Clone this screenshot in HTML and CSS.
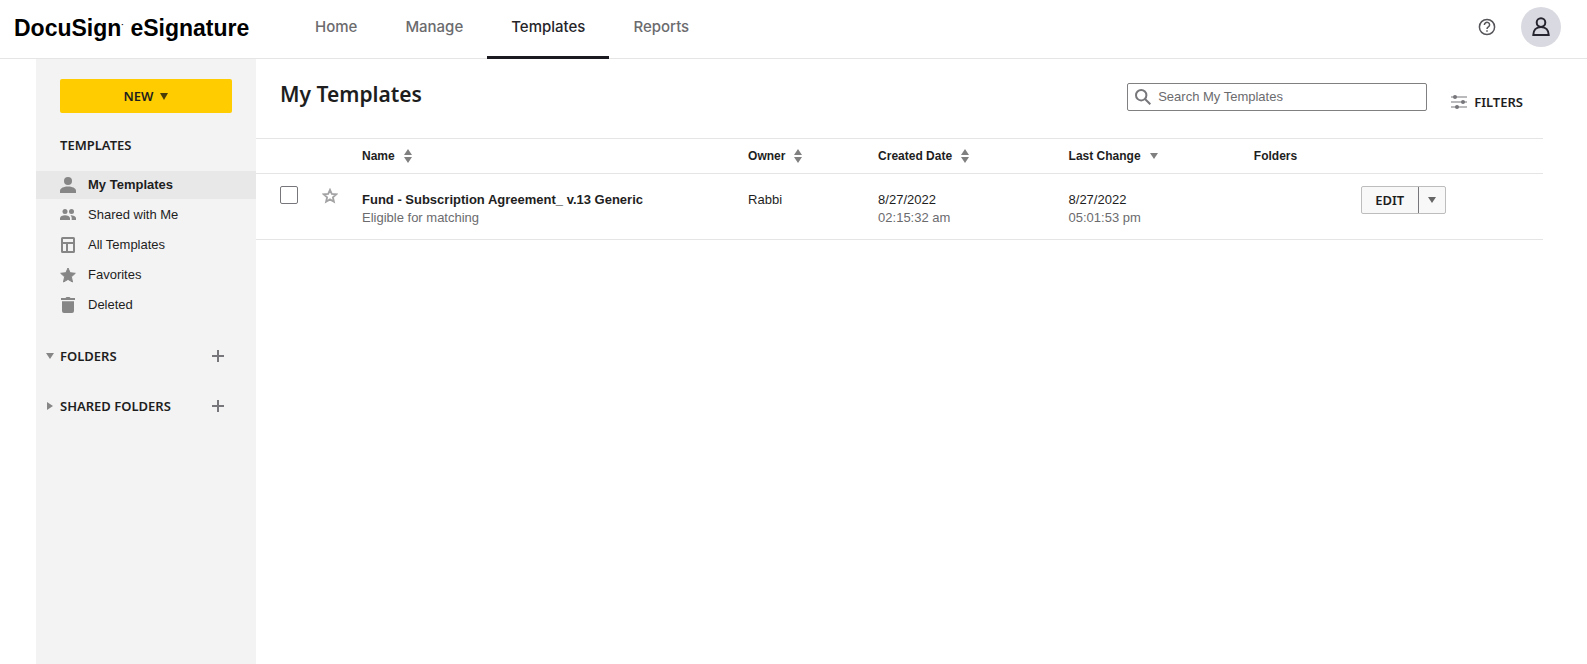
FILE: index.html
```html
<!DOCTYPE html>
<html lang="en">
<head>
<meta charset="utf-8">
<title>My Templates - DocuSign eSignature</title>
<link rel="stylesheet" href="styles.css">
</head>
<body>
<header class="topbar">
  <a class="brand" href="#">DocuSign<sup class="brand-mark">·</sup> eSignature</a>
  <nav class="nav" aria-label="Main">
    <a class="nav-link" href="#">Home</a>
    <a class="nav-link" href="#">Manage</a>
    <a class="nav-link nav-link-active" href="#" aria-current="page">Templates</a>
    <a class="nav-link" href="#">Reports</a>
  </nav>
  <div class="account">
    <button class="icon-button" type="button" aria-label="Help">
      <svg width="18" height="18" viewBox="0 0 18 18" fill="none" stroke="#55555a" stroke-width="1.5"><circle cx="9" cy="9" r="7.6"/><path d="M6.400 7V6.800a2.600 2.400 0 1 1 4 2C9.500 9.400 9 9.700 9 11"/><path d="M9 12.200v1.600"/></svg>
    </button>
    <button class="avatar" type="button" aria-label="Profile">
      <svg width="20" height="20" viewBox="0 0 20 20" fill="none" stroke="#26252f" stroke-width="2"><circle cx="10" cy="5.600" r="4.300"/><path d="M2.300 18c0-4.800 2.900-8.100 7.700-8.100s7.700 3.300 7.700 8.100z"/></svg>
    </button>
  </div>
</header>
<div class="layout">
  <aside class="sidebar">
    <button class="new-button" type="button">NEW
      <svg width="8" height="7" viewBox="0 0 8 7"><path d="M0 0h8L4 7z" fill="#4a3c08"/></svg>
    </button>
    <h2 class="side-heading">TEMPLATES</h2>
    <ul class="side-list">
      <li><a class="side-link side-link-active" href="#"><svg width="16" height="16" viewBox="0 0 16 16" fill="#868686"><circle cx="8" cy="4" r="4"/><path d="M0 16v-2.500C0 11 4 9.400 8 9.400s8 1.600 8 4.100V16z"/></svg>My Templates</a></li>
      <li><a class="side-link" href="#"><svg width="16" height="16" viewBox="0 0 16 16" fill="#868686"><circle cx="5" cy="4.500" r="2.500"/><circle cx="11.500" cy="4.500" r="2.500"/><path d="M0 13v-1.800C0 9.200 2.500 8.200 5 8.200s5 1 5 3V13zM10.300 8.200c3 0 5.700 1 5.700 3V13h-4.300v-1.800c0-1.300-.5-2.200-1.400-3z"/></svg>Shared with Me</a></li>
      <li><a class="side-link" href="#"><svg width="16" height="16" viewBox="0 0 16 16" fill="none" stroke="#868686" stroke-width="2"><rect x="2" y="1" width="12" height="14" rx=".5"/><path d="M2 6h12M7 6v9"/></svg>All Templates</a></li>
      <li><a class="side-link" href="#"><svg width="16" height="16" viewBox="0 0 16 16" fill="#868686" stroke="#868686" stroke-linejoin="round"><path d="M8 1l2.100 4.700 5.200.6-3.900 3.500 1.100 5.200L8 12.400 3.500 15l1.100-5.200L.7 6.300l5.200-.6z"/></svg>Favorites</a></li>
      <li><a class="side-link" href="#"><svg width="16" height="16" viewBox="0 0 16 16" fill="#868686"><path d="M1 1h4.500l1-1h3l1 1H15v2H1zM2 4.300h12V14a2 2 0 0 1-2 2H4a2 2 0 0 1-2-2z"/></svg>Deleted</a></li>
    </ul>
    <section class="folder-group">
      <button class="folder-toggle" type="button" aria-expanded="true"><svg width="8" height="8" viewBox="0 0 8 8"><path d="M0 1h8L4 7z" fill="#868686"/></svg>FOLDERS</button>
      <button class="icon-button" type="button" aria-label="Add folder"><svg width="12" height="12" viewBox="0 0 12 12" stroke="#77777b" stroke-width="2"><path d="M6 0v12M0 6h12"/></svg></button>
    </section>
    <section class="folder-group">
      <button class="folder-toggle" type="button" aria-expanded="false"><svg width="8" height="8" viewBox="0 0 8 8"><path d="M1 0v8l6-4z" fill="#868686"/></svg>SHARED FOLDERS</button>
      <button class="icon-button" type="button" aria-label="Add shared folder"><svg width="12" height="12" viewBox="0 0 12 12" stroke="#77777b" stroke-width="2"><path d="M6 0v12M0 6h12"/></svg></button>
    </section>
  </aside>
  <main class="content">
    <div class="content-head">
      <h1 class="title">My Templates</h1>
      <label class="search">
        <svg width="16" height="16" viewBox="0 0 16 16" fill="none" stroke="#77777b" stroke-width="2"><circle cx="6.200" cy="6.200" r="5.200"/><path d="M10 10l5.300 5.300"/></svg>
        <input class="search-input" type="text" placeholder="Search My Templates" aria-label="Search My Templates">
      </label>
      <button class="filters" type="button">
        <svg width="16" height="14" viewBox="0 0 16 14" fill="#77777b"><path d="M0 1.500h16v1H0zM0 6.500h16v1H0zM0 11.500h16v1H0z"/><circle cx="4" cy="2" r="2"/><circle cx="12" cy="7" r="2"/><circle cx="6" cy="12" r="2"/></svg>
        FILTERS
      </button>
    </div>
    <table class="table">
      <colgroup><col class="col-check"><col class="col-star"><col class="col-name"><col class="col-owner"><col class="col-created"><col class="col-changed"><col class="col-folders"><col></colgroup>
      <thead>
        <tr>
          <th></th><th></th>
          <th scope="col"><button class="sort" type="button">Name<svg width="8" height="14" viewBox="0 0 8 14" fill="#808080"><path d="M0 6h8L4 0zM0 8h8l-4 6z"/></svg></button></th>
          <th scope="col"><button class="sort" type="button">Owner<svg width="8" height="14" viewBox="0 0 8 14" fill="#808080"><path d="M0 6h8L4 0zM0 8h8l-4 6z"/></svg></button></th>
          <th scope="col"><button class="sort" type="button">Created Date<svg width="8" height="14" viewBox="0 0 8 14" fill="#808080"><path d="M0 6h8L4 0zM0 8h8l-4 6z"/></svg></button></th>
          <th scope="col" aria-sort="descending"><button class="sort" type="button">Last Change<svg width="8" height="14" viewBox="0 0 8 14" fill="#808080"><path d="M0 4h8l-4 6z"/></svg></button></th>
          <th scope="col">Folders</th>
          <th></th>
        </tr>
      </thead>
      <tbody>
        <tr>
          <td class="cell-control cell-first"><input class="check" type="checkbox" aria-label="Select template"></td>
          <td class="cell-control"><button class="icon-button star" type="button" aria-label="Add to favorites"><svg width="16" height="16" viewBox="0 0 16 16" fill="none" stroke="#a3a3a5" stroke-width="1.800"><path d="M8 1.800l1.800 4.100 4.500.4-3.400 3 1 4.400L8 11.400l-3.900 2.300 1-4.400-3.400-3 4.500-.4z"/></svg></button></td>
          <td><a class="name" href="#">Fund - Subscription Agreement_ v.13 Generic</a><div class="muted">Eligible for matching</div></td>
          <td>Rabbi</td>
          <td>8/27/2022<div class="muted">02:15:32 am</div></td>
          <td>8/27/2022<div class="muted">05:01:53 pm</div></td>
          <td></td>
          <td class="cell-actions">
            <div class="split">
              <button class="split-main" type="button">EDIT</button>
              <button class="split-more" type="button" aria-label="More actions"><svg width="8" height="6" viewBox="0 0 8 6"><path d="M0 0h8L4 6z" fill="#666"/></svg></button>
            </div>
          </td>
        </tr>
      </tbody>
    </table>
  </main>
</div>
</body>
</html>
```
FILE: styles.css
```css
* { box-sizing: border-box; }

body {
  margin: 0;
  min-height: 100vh;
  display: flex;
  flex-direction: column;
  background: #fff;
  color: #1e1e1e;
  font: 13px/18px "Liberation Sans", Arial, sans-serif;
}

a { color: inherit; text-decoration: none; }
svg { display: block; flex: none; }

button {
  margin: 0;
  padding: 0;
  border: 0;
  background: none;
  color: inherit;
  font: inherit;
  cursor: pointer;
}

.topbar {
  display: flex;
  align-items: center;
  height: 59px;
  padding: 0 26px 0 14px;
  border-bottom: 1px solid #e5e5e5;
}

.brand {
  width: 277px;
  padding-bottom: 3px;
  color: #000;
  font-size: 23px;
  font-weight: 700;
  line-height: 30px;
  white-space: nowrap;
}

.brand-mark { font-size: 8px; line-height: 1px; }

.nav { display: flex; align-self: stretch; margin-bottom: -1px; }

.nav-link {
  padding: 16px 24px 0;
  border-bottom: 3px solid transparent;
  color: #6b6b6e;
  font: 500 15px/22px Inter, sans-serif;
}

.nav-link-active { border-bottom-color: #1b1a21; color: #26252a; }

.account {
  display: flex;
  align-items: center;
  gap: 25px;
  margin-left: auto;
  padding-bottom: 4px;
}

.avatar {
  display: grid;
  place-items: center;
  width: 40px;
  height: 40px;
  border-radius: 50%;
  background: #d9d9e1;
}

.layout { flex: 1; display: flex; padding: 0 44px 0 36px; }

.sidebar { flex: none; width: 220px; background: #f3f3f3; }

.new-button {
  display: flex;
  align-items: center;
  justify-content: center;
  gap: 7px;
  width: 172px;
  height: 34px;
  margin: 20px 24px 0;
  border-radius: 2px;
  background: #ffcc00;
  font: 600 13px/18px "Noto Sans", sans-serif;
}

.side-heading {
  margin: 23px 24px 17px;
  font: 600 13px/18px "Noto Sans", sans-serif;
}

.side-list {
  display: grid;
  gap: 2px;
  margin: 0;
  padding: 0;
  list-style: none;
}

.side-link {
  display: flex;
  align-items: center;
  gap: 12px;
  height: 28px;
  padding: 0 24px 1px;
}

.side-link-active { padding-bottom: 0; background: #e8e8e8; font-weight: 700; }

.folder-group {
  display: flex;
  align-items: center;
  justify-content: space-between;
  height: 18px;
  margin-top: 32px;
  padding: 0 32px 0 10px;
}

.side-list + .folder-group { margin-top: 28px; }

.folder-toggle {
  display: flex;
  align-items: center;
  gap: 6px;
  font: 600 13px/18px "Noto Sans", sans-serif;
}

.content { flex: 1; min-width: 0; }

.content-head {
  display: flex;
  align-items: center;
  height: 79px;
  padding: 0 20px 3px 24px;
}

.title {
  margin: 0 auto 0 0;
  padding-bottom: 6px;
  font: 600 21px/28px "Noto Sans", sans-serif;
}

.search {
  display: flex;
  align-items: center;
  gap: 7px;
  width: 300px;
  height: 28px;
  padding: 0 7px;
  border: 1px solid #808083;
  border-radius: 2px;
}

.search-input {
  flex: 1;
  min-width: 0;
  padding: 0;
  border: 0;
  outline: 0;
  background: none;
  color: inherit;
  font: inherit;
}

.search-input::placeholder { color: #6b6b6e; opacity: 1; }

.filters {
  display: flex;
  align-items: center;
  gap: 7px;
  margin-left: 24px;
  padding-top: 9px;
  font: 600 13px/18px "Noto Sans", sans-serif;
}

.table {
  width: 100%;
  border-collapse: collapse;
  table-layout: fixed;
}

.table tr { border-top: 1px solid #e5e5e5; border-bottom: 1px solid #e5e5e5; }

.table th {
  height: 35px;
  padding: 0;
  text-align: left;
  font-size: 12px;
  font-weight: 700;
}

.table td { height: 66px; padding: 17px 0 12px; vertical-align: top; }

.col-check { width: 66px; }
.col-star { width: 40px; }
.col-name { width: 30%; }
.col-owner { width: 10.1%; }
.col-created { width: 14.8%; }
.col-changed { width: 14.4%; }
.col-folders { width: 8.3%; }

.sort { display: flex; align-items: center; gap: 9px; }

.table .cell-control { padding-top: 12px; }
.table .cell-first { padding-left: 24px; }
.table .cell-actions { padding-top: 12px; }

.check {
  display: block;
  appearance: none;
  width: 18px;
  height: 18px;
  margin: 0;
  border: 1px solid #77777b;
  border-radius: 2px;
  background: #fff;
}

.check:checked { background: #77777b; }

.star { padding-top: 2px; }

.name { font-weight: 700; white-space: nowrap; }

.muted { color: #6b6b6e; }

.split {
  display: inline-flex;
  height: 28px;
  border: 1px solid #bdbdbd;
  border-radius: 2px;
  background: #f8f8f8;
}

.split-main {
  width: 56px;
  font: 600 13px/18px "Noto Sans", sans-serif;
}

.split-more {
  display: grid;
  place-items: center;
  width: 27px;
  border-left: 1px solid #77777b;
}
```
